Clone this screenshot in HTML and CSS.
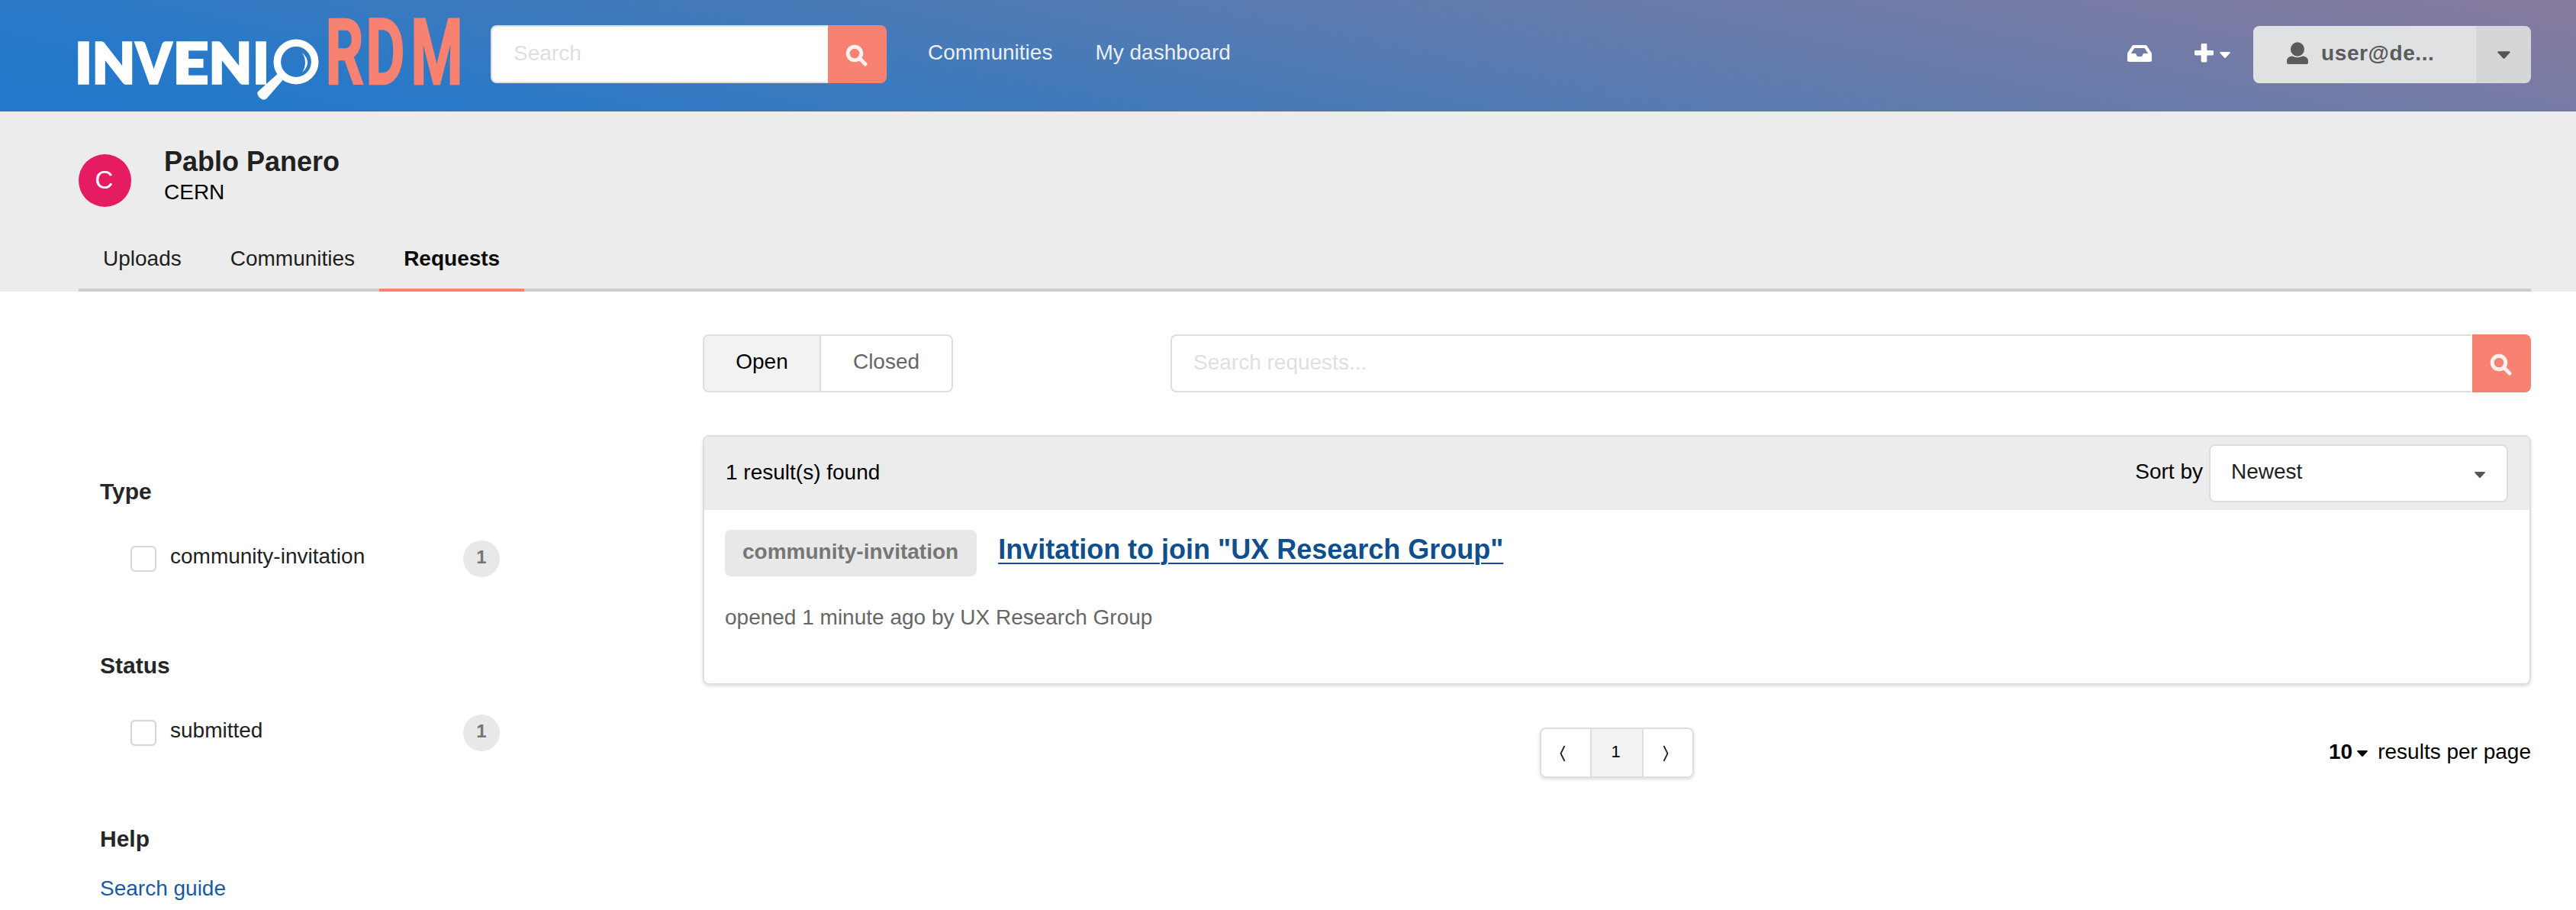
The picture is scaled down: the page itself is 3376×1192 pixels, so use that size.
FILE: index.html
```html
<!DOCTYPE html>
<html lang="en">
<head>
<meta charset="utf-8">
<title>Requests</title>
<link rel="stylesheet" href="styles.css">
</head>
<body>
<header class="navbar">
  <svg class="logo" width="504" height="112" viewBox="101 22 504 112" role="img" aria-label="InvenioRDM">
    <g class="logo-word">
      <text x="98.500" y="108.500" textLength="22" lengthAdjust="spacingAndGlyphs">I</text>
      <text x="121" y="108.500" textLength="56" lengthAdjust="spacingAndGlyphs">N</text>
      <text x="178.500" y="108.500" textLength="46" lengthAdjust="spacingAndGlyphs">V</text>
      <text x="227" y="108.500" textLength="46" lengthAdjust="spacingAndGlyphs">E</text>
      <text x="274" y="108.500" textLength="56" lengthAdjust="spacingAndGlyphs">N</text>
      <text x="331.500" y="108.500" textLength="21" lengthAdjust="spacingAndGlyphs">I</text>
    </g>
    <ellipse cx="388" cy="81" rx="24.700" ry="24.700" fill="none" stroke="#fff" stroke-width="9.600"/>
    <path d="M396 69q14 13 0 26q8-13 0-26z" fill="#fff"/>
    <path d="M363.500 97l7 8l-21 24q-4 3-8 0q-5-4-4-8.500z" fill="#fff"/>
    <text class="logo-rdm" transform="scale(.67 1)" x="637 715.700 803.700" y="109.500">RDM</text>
  </svg>
  <form class="search nav-search">
    <span class="search-input">Search</span>
    <span class="search-button"><svg width="30" height="30" viewBox="0 0 30 30"><circle cx="12" cy="12" r="8.800"/><path d="M18.500 18.500l7.500 7.500"/></svg></span>
  </form>
  <nav class="nav-links"><a>Communities</a><a>My dashboard</a></nav>
  <div class="nav-right">
    <svg class="inbox" width="32" height="22" viewBox="0 0 32 22"><path fill="#fff" fill-rule="evenodd" d="M8.500 0h15q1.500 0 2.300 1.300l5.400 8.200q.8 1.200.8 2.500v7.500q0 2.500-2.500 2.500h-27q-2.500 0-2.500-2.500v-7.500q0-1.300.8-2.500l5.400-8.200q.8-1.300 2.300-1.300zM9.500 4l-4.600 7h6.100l2 4h6l2-4h6.100l-4.600-7z"/></svg>
    <svg class="plus" width="25" height="25" viewBox="0 0 26 26"><path fill="#fff" d="M10.500 0h5q1.500 0 1.500 1.500v7.800h7.500q1.500 0 1.500 1.500v3.900q0 1.500-1.500 1.500h-7.500v7.800q0 1.500-1.500 1.500h-5q-1.500 0-1.500-1.500v-7.800h-7.500q-1.500 0-1.500-1.500v-3.900q0-1.500 1.500-1.500h7.500v-7.800q0-1.500 1.500-1.500z"/></svg>
    <svg class="caret caret-light" width="14" height="8" viewBox="0 0 14 8"><path d="M1 0h12q1.400.4.500 1.500l-5.500 6q-1 1-2 0l-5.500-6q-.9-1.100.5-1.500z"/></svg>
    <div class="user">
      <span class="user-name"><svg width="30" height="30" viewBox="0 0 30 30"><ellipse cx="15" cy="9.500" rx="9" ry="9.300"/><path d="M8 18.500q7 3.500 14 0q7 .5 7 7v1.500q0 2-2 2h-24q-2 0-2-2v-1.500q0-6.500 7-7z"/></svg>user@de...</span>
      <span class="user-toggle"><svg class="caret" width="17" height="10" viewBox="0 0 14 8"><path d="M1 0h12q1.400.4.500 1.500l-5.500 6q-1 1-2 0l-5.500-6q-.9-1.100.5-1.500z"/></svg></span>
    </div>
  </div>
</header>
<section class="profile">
  <div class="identity">
    <span class="avatar">C</span>
    <div><h1>Pablo Panero</h1><p>CERN</p></div>
  </div>
  <nav class="tabs"><a>Uploads</a><a>Communities</a><a class="active">Requests</a></nav>
</section>
<main class="layout">
  <aside class="filters">
    <section class="facet"><h2>Type</h2><label><i class="box"></i>community-invitation<b>1</b></label></section>
    <section class="facet"><h2>Status</h2><label><i class="box"></i>submitted<b>1</b></label></section>
    <section class="help"><h2>Help</h2><a class="guide">Search guide</a></section>
  </aside>
  <div class="content">
    <div class="toolbar">
      <div class="switch"><span class="on">Open</span><span class="off">Closed</span></div>
      <form class="search request-search">
        <span class="search-input">Search requests...</span>
        <span class="search-button"><svg width="30" height="30" viewBox="0 0 30 30"><circle cx="12" cy="12" r="8.800"/><path d="M18.500 18.500l7.500 7.500"/></svg></span>
      </form>
    </div>
    <section class="card">
      <div class="card-head">
        <span>1 result(s) found</span>
        <div class="sort">Sort by<span class="select">Newest<svg class="caret" width="14" height="8" viewBox="0 0 14 8"><path d="M1 0h12q1.400.4.500 1.500l-5.500 6q-1 1-2 0l-5.500-6q-.9-1.100.5-1.500z"/></svg></span></div>
      </div>
      <div class="card-body">
        <div class="request"><span class="label">community-invitation</span><a>Invitation to join "UX Research Group"</a></div>
        <p>opened 1 minute ago by UX Research Group</p>
      </div>
    </section>
    <div class="footer">
      <div class="pager">
        <span><svg width="8" height="22" viewBox="0 0 8 22"><path d="M6.500 1l-5 10l5 10"/></svg></span>
        <span class="current">1</span>
        <span><svg width="8" height="22" viewBox="0 0 8 22"><path d="M1.500 1l5 10l-5 10"/></svg></span>
      </div>
      <div class="per-page"><b>10</b><svg class="caret" width="14" height="8" viewBox="0 0 14 8"><path d="M1 0h12q1.400.4.500 1.500l-5.500 6q-1 1-2 0l-5.500-6q-.9-1.100.5-1.500z"/></svg>results per page</div>
    </div>
  </div>
</main>
</body>
</html>
```
FILE: styles.css
```css
* { box-sizing: border-box; }
body { margin: 0; height: 1192px; overflow: hidden; background: #fff; color: #000; font: 28px/40px "Liberation Sans", Arial, sans-serif; }
h1, h2, p { margin: 0; }
svg { display: block; flex: none; }
.navbar { display: flex; align-items: flex-start; height: 146px; padding: 0 59px 0 101px; background: linear-gradient(12deg, #2178cb 0%, #2779c9 14%, #3f7abb 35%, #5a7bb0 57%, #887b9e 100%); }
.logo { margin-top: 22px; overflow: visible; }
.logo-word { fill: #fff; stroke: #fff; stroke-width: 3.5; font: 900 73px Lato, sans-serif; }
.logo-rdm { fill: #f88272; stroke: #f88272; stroke-width: 4; vector-effect: non-scaling-stroke; font: 500 116px Roboto, sans-serif; }
.search { display: flex; height: 76px; margin: 0; }
.search-input { flex: 1; padding: 15px 28px; border: 2px solid #dedede; border-right-color: #fff; border-radius: 8px 0 0 8px; background: #fff; color: #dfdfdf; line-height: 40px; }
.search-button { display: flex; justify-content: center; align-items: center; width: 77px; border-radius: 0 8px 8px 0; background: #f88272; }
.search-button svg { margin: 4px 1px 0 0; fill: none; stroke: #fff0ee; stroke-width: 5; stroke-linecap: round; }
.nav-search { width: 519px; margin: 33px 0 0 38px; }
.nav-links { display: flex; gap: 56px; margin: 49px 0 0 54px; color: rgba(255,255,255,.9); }
.nav-right { display: flex; margin-left: auto; }
.inbox { margin-top: 59px; }
.plus { margin: 57px 0 0 56px; }
.caret { fill: #555; }
.caret-light { fill: #fff; margin: 68px 0 0 8px; }
.user { display: flex; width: 364px; height: 75px; margin: 34px 0 0 30px; border-radius: 8px; overflow: hidden; color: #5a5b5b; font-weight: 700; letter-spacing: .6px; }
.user-name { display: flex; flex: 1; gap: 16px; padding: 16px 0 0 43px; background: #e0e1e2; }
.user-name svg { margin-top: 5px; fill: #5a5b5b; }
.user-toggle { display: flex; align-items: center; justify-content: center; width: 72px; background: #d5d6d8; }
.profile { height: 236px; padding: 47px 59px 0 103px; background: #ececec; }
.identity { display: flex; align-items: flex-start; height: 131px; }
.avatar { width: 69px; height: 69px; margin: 9px 43px 0 0; padding-right: 2px; border-radius: 50%; background: #e61c63; color: #fff; font-size: 33px; line-height: 68px; text-align: center; }
h1 { color: #212121; font-size: 36px; line-height: 37px; }
.identity p { padding-top: 2px; line-height: 40px; }
.tabs { display: flex; height: 58px; border-bottom: 4px solid #cdcdcd; color: #1f1f1f; }
.tabs a { height: 58px; padding: 0 32px; line-height: 29px; }
.tabs .active { border-bottom: 4px solid #f88272; color: #0b0b0b; font-weight: 700; }
.layout { display: flex; padding: 56px 59px 0 131px; }
.filters { width: 524px; padding-top: 186px; }
.facet { height: 227.5px; }
.filters h2 { color: #262626; font-size: 30px; line-height: 40px; }
.facet label { display: flex; align-items: flex-start; height: 48px; margin-top: 45px; padding-left: 40px; color: #212121; }
.box { width: 34px; height: 34px; margin: 6px 18px 0 0; border: 2px solid #d4d4d5; border-radius: 6px; }
.facet b { width: 48px; height: 48px; margin: -1px 0 0 auto; border-radius: 50%; background: #e8e8e8; color: #767676; font-size: 24px; line-height: 44px; text-align: center; }
.guide { display: block; padding-top: 26px; line-height: 38px; color: #175ba4; }
.content { flex: 1; margin-left: 266px; }
.toolbar { display: flex; height: 132px; }
.switch { display: flex; width: 328px; height: 76px; border: 2px solid #dedede; border-radius: 8px; overflow: hidden; line-height: 68px; text-align: center; }
.on { width: 153px; border-right: 2px solid #dedede; background: #f2f2f2; }
.off { flex: 1; color: #666; }
.request-search { flex: 1; margin-left: 285px; }
.card { height: 327px; border: 2px solid #dededf; border-radius: 8px; box-shadow: 0 2px 4px rgba(34,36,38,.15); overflow: hidden; }
.card-head { display: flex; justify-content: space-between; align-items: flex-start; height: 96px; padding: 10px 28px; background: #ececec; line-height: 74px; }
.sort { display: flex; gap: 8px; line-height: 72px; }
.select { display: flex; justify-content: space-between; width: 392px; height: 76px; padding: 0 28px 0 27px; border: 2px solid #dedede; border-radius: 8px; background: #fff; color: #212121; line-height: 68px; }
.select .caret { margin-top: 34px; }
.card-body { padding: 26px 27px; }
.request { display: flex; gap: 28px; height: 61px; }
.label { height: 61px; padding: 0 24px 0 23px; border-radius: 8px; background: #e8e8e8; color: #767676; font-weight: 700; line-height: 57px; }
.request a { color: #114f8c; font-size: 36px; font-weight: 700; line-height: 51px; text-decoration: underline; text-decoration-thickness: 2px; text-underline-offset: 5px; }
.card-body p { margin-top: 34px; color: #666; }
.footer { position: relative; display: flex; justify-content: center; margin-top: 56px; }
.pager { display: flex; width: 202px; height: 66px; border: 2px solid #dedede; border-radius: 8px; box-shadow: 0 2px 4px rgba(34,36,38,.15); overflow: hidden; }
.pager span { display: flex; justify-content: center; flex: 1; }
.pager span + span { border-left: 2px solid #dedede; }
.pager .current { background: #f2f2f2; font-size: 22px; line-height: 59px; padding-right: 3px; }
.pager svg { margin-top: 21px; margin-right: 7px; fill: none; stroke: #222; stroke-width: 1.8; }
.per-page { position: absolute; right: 0; top: 12px; display: flex; }
.per-page .caret { margin: 18px 13px 0 6px; fill: #000; }
```
